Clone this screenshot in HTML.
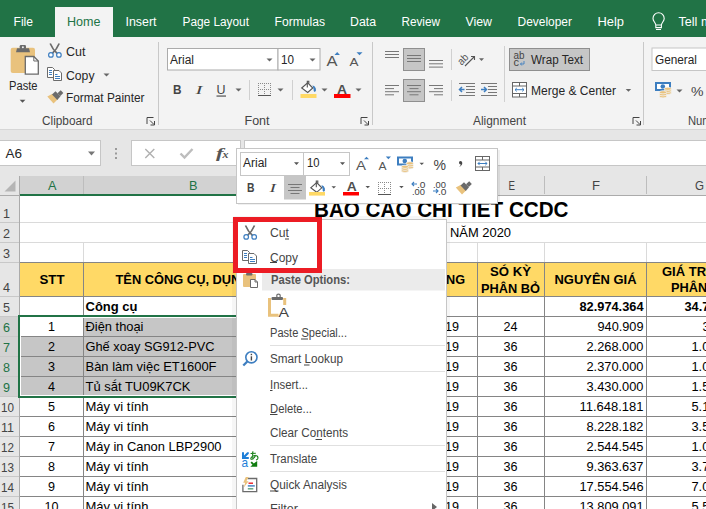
<!DOCTYPE html>
<html><head><meta charset="utf-8"><style>
html,body{margin:0;padding:0;width:706px;height:509px;overflow:hidden;background:#fff}
svg{display:block;font-family:"Liberation Sans",sans-serif}
</style></head><body>
<svg width="706" height="509" viewBox="0 0 706 509">
<rect x="0" y="0" width="706" height="37" fill="#217346" />
<rect x="55" y="7" width="58" height="30" fill="#f3f3f3" />
<text x="13.5" y="26" font-size="12.5" fill="#ffffff" textLength="19.5" lengthAdjust="spacingAndGlyphs" >File</text>
<text x="125.5" y="26" font-size="12.5" fill="#ffffff" textLength="31" lengthAdjust="spacingAndGlyphs" >Insert</text>
<text x="182.5" y="26" font-size="12.5" fill="#ffffff" textLength="66.5" lengthAdjust="spacingAndGlyphs" >Page Layout</text>
<text x="274.5" y="26" font-size="12.5" fill="#ffffff" textLength="50.5" lengthAdjust="spacingAndGlyphs" >Formulas</text>
<text x="350.0" y="26" font-size="12.5" fill="#ffffff" textLength="26.0" lengthAdjust="spacingAndGlyphs" >Data</text>
<text x="401.5" y="26" font-size="12.5" fill="#ffffff" textLength="38.5" lengthAdjust="spacingAndGlyphs" >Review</text>
<text x="465.5" y="26" font-size="12.5" fill="#ffffff" textLength="26.5" lengthAdjust="spacingAndGlyphs" >View</text>
<text x="517.5" y="26" font-size="12.5" fill="#ffffff" textLength="54.5" lengthAdjust="spacingAndGlyphs" >Developer</text>
<text x="597.5" y="26" font-size="12.5" fill="#ffffff" textLength="26.5" lengthAdjust="spacingAndGlyphs" >Help</text>
<text x="67" y="26" font-size="12.5" fill="#217346" textLength="33.5" lengthAdjust="spacingAndGlyphs" >Home</text>
<path d="M655.8,25 c0,-2.2 -2.8,-3.6 -2.8,-6.6 a5.6,5.6 0 0 1 11.2,0 c0,3 -2.8,4.4 -2.8,6.6 z M655.8,25 v2.6 h5.6 v-2.6 M656,29.5 h5" fill="none" stroke="#ffffff" stroke-width="1.1" />
<text x="678.5" y="26" font-size="12.5" fill="#ffffff" textLength="70" lengthAdjust="spacingAndGlyphs" >Tell me what</text>
<rect x="0" y="37" width="706" height="92" fill="#f3f3f3" />
<rect x="0" y="129" width="706" height="1" fill="#d6d6d6" />
<rect x="0" y="130" width="706" height="46" fill="#e6e6e6" />
<rect x="158" y="42" width="1" height="83" fill="#c8c8c8" />
<rect x="372" y="42" width="1" height="83" fill="#c8c8c8" />
<rect x="643" y="42" width="1" height="83" fill="#c8c8c8" />
<text x="42" y="125" font-size="12" fill="#444444" textLength="50.5" lengthAdjust="spacingAndGlyphs" >Clipboard</text>
<text x="244.5" y="125" font-size="12" fill="#444444" textLength="25" lengthAdjust="spacingAndGlyphs" >Font</text>
<text x="473" y="125" font-size="12" fill="#444444" textLength="53" lengthAdjust="spacingAndGlyphs" >Alignment</text>
<text x="688" y="125" font-size="12" fill="#444444" textLength="40" lengthAdjust="spacingAndGlyphs" >Number</text>
<path d="M147.0,124 v-6.5 h6.5" fill="none" stroke="#444" stroke-width="1" />
<path d="M150.0,120.5 l4,4 M154.5,121 v4 h-4" fill="none" stroke="#444" stroke-width="1" />
<path d="M361.0,124 v-6.5 h6.5" fill="none" stroke="#444" stroke-width="1" />
<path d="M364.0,120.5 l4,4 M368.5,121 v4 h-4" fill="none" stroke="#444" stroke-width="1" />
<path d="M633.0,124 v-6.5 h6.5" fill="none" stroke="#444" stroke-width="1" />
<path d="M636.0,120.5 l4,4 M640.5,121 v4 h-4" fill="none" stroke="#444" stroke-width="1" />
<rect x="10.7" y="47.7" width="24.3" height="25.3" fill="#e9c27d"  rx="2"/>
<path d="M16,52.2 l1,-3.9 h12 l1,3.9 z" fill="#6b6b6b" />
<rect x="19.7" y="45" width="6.3" height="4" fill="#6b6b6b"  rx="1.2"/>
<circle cx="22.9" cy="47.3" r="1" fill="#f3f3f3"/>
<path d="M25.3,56.5 h8.5 l4.5,4.5 v13.2 h-13 z" fill="#ffffff" stroke="#6b6b6b" stroke-width="1.3" />
<path d="M33.8,56.5 v4.5 h4.5" fill="none" stroke="#6b6b6b" stroke-width="1" />
<text x="9" y="90" font-size="12.5" fill="#262626" textLength="28.5" lengthAdjust="spacingAndGlyphs" >Paste</text>
<path d="M19.7,99.8 h5.7 l-2.85,3 z" fill="#555" />
<path d="M50.2,43.5 Q52.7,49.5 57.2,53.5 M59.2,43.5 Q56.7,49.5 52.2,53.5" fill="none" stroke="#6b6b6b" stroke-width="1.7" />
<circle cx="50.900000000000006" cy="54.9" r="2.3" fill="#fff" stroke="#3d7ec0" stroke-width="1.2"/>
<circle cx="58.900000000000006" cy="54.9" r="2.3" fill="#fff" stroke="#3d7ec0" stroke-width="1.2"/>
<text x="66" y="56" font-size="12.5" fill="#262626" textLength="19.5" lengthAdjust="spacingAndGlyphs" >Cut</text>
<path d="M47.5,67.5 h5 l2,2 v8 h-7 z" fill="#fff" stroke="#6b6b6b" stroke-width="1" />
<path d="M53.5,70.5 h5.5 l2.5,2.5 v7.5 h-8 z" fill="#fff" stroke="#6b6b6b" stroke-width="1" />
<path d="M49,70.5h3M49,72.5h3M49,74.5h3M55,74.5h2.5M55,76.5h5M55,78.5h5" fill="none" stroke="#3d7ec0" stroke-width="1" />
<text x="66" y="79.5" font-size="12.5" fill="#262626" textLength="28.5" lengthAdjust="spacingAndGlyphs" >Copy</text>
<path d="M103.5,73.5 h6 l-3,3 z" fill="#666" />
<path d="M47.3,96.5 L52.5,93.8 L57.8,99.2 L53.5,103.5 z" fill="#e9c27d" />
<path d="M52,94.5 l3.5,-3.2 l5,5 l-3.2,3.7 z" fill="#6b6b6b" />
<path d="M57.5,93.3 l3.2,-3 l2.6,2.6 l-3,3.2 z" fill="#6b6b6b" />
<text x="66" y="102" font-size="12.5" fill="#262626" textLength="78.5" lengthAdjust="spacingAndGlyphs" >Format Painter</text>
<rect x="167.5" y="48.5" width="110.5" height="21.5" fill="#ffffff"  stroke="#ababab" stroke-width="1"/>
<rect x="278" y="48.5" width="42" height="21.5" fill="#ffffff"  stroke="#ababab" stroke-width="1"/>
<text x="170" y="64" font-size="12.5" fill="#262626" textLength="24" lengthAdjust="spacingAndGlyphs" >Arial</text>
<text x="281" y="64" font-size="12.5" fill="#262626" textLength="13" lengthAdjust="spacingAndGlyphs" >10</text>
<path d="M266.5,58.5 h6 l-3,3 z" fill="#666" />
<path d="M309.5,58.5 h6 l-3,3 z" fill="#666" />
<text x="326.5" y="65.5" font-size="15" fill="#555" textLength="11" lengthAdjust="spacingAndGlyphs" >A</text>
<path d="M334.5,55 l2.7,-3 l2.7,3 z" fill="#3d7ec0" />
<text x="349.5" y="65.5" font-size="11.5" fill="#555" textLength="9" lengthAdjust="spacingAndGlyphs" >A</text>
<path d="M356.5,52.3 h6 l-3,3 z" fill="#3d7ec0" />
<text x="173" y="94" font-size="12.5" fill="#444" textLength="8.5" lengthAdjust="spacingAndGlyphs" font-weight="bold" >B</text>
<text x="195.5" y="94" font-size="13" fill="#444" textLength="7" lengthAdjust="spacingAndGlyphs" font-style="italic" font-family="Liberation Serif">I</text>
<text x="216.5" y="94" font-size="12.5" fill="#444" textLength="9" lengthAdjust="spacingAndGlyphs" >U</text>
<rect x="216.5" y="95.5" width="9.5" height="1.1" fill="#444" />
<path d="M235.5,88.5 h6 l-3,3 z" fill="#666" />
<rect x="249" y="80" width="1" height="20" fill="#d0d0d0" />
<path d="M258,83h1v1h-1zM258,89h1v1h-1zM260,83h1v1h-1zM260,89h1v1h-1zM262,83h1v1h-1zM262,89h1v1h-1zM264,83h1v1h-1zM264,89h1v1h-1zM266,83h1v1h-1zM266,89h1v1h-1zM268,83h1v1h-1zM268,89h1v1h-1zM270,83h1v1h-1zM270,89h1v1h-1zM258,83h1v1h-1zM264,83h1v1h-1zM270,83h1v1h-1zM258,85h1v1h-1zM264,85h1v1h-1zM270,85h1v1h-1zM258,87h1v1h-1zM264,87h1v1h-1zM270,87h1v1h-1zM258,89h1v1h-1zM264,89h1v1h-1zM270,89h1v1h-1zM258,91h1v1h-1zM264,91h1v1h-1zM270,91h1v1h-1zM258,93h1v1h-1zM264,93h1v1h-1zM270,93h1v1h-1z" fill="#8a8a8a" />
<rect x="258" y="95" width="13" height="1" fill="#555" />
<path d="M277.5,88.5 h6 l-3,3 z" fill="#666" />
<rect x="292" y="80" width="1" height="20" fill="#d0d0d0" />
<path d="M301.7,88.0 L307.7,82.8 L312.8,88.0 L307.7,92.5 z" fill="#fff" stroke="#555" stroke-width="1.1" />
<path d="M307.3,87.5 V81.2 h1.5 v2.2" fill="none" stroke="#555" stroke-width="1.1" />
<path d="M312.5,85.3 q2.8,0.6 3.4,3.4 q0.6,2.8 -1.3,3.2 q-1.3,-0.6 -1,-3 z" fill="#3d7ec0" />
<rect x="300.5" y="94" width="16" height="4" fill="#ffd966" />
<path d="M321.5,88.5 h6 l-3,3 z" fill="#666" />
<text x="337" y="93.8" font-size="13.5" fill="#505050" textLength="10" lengthAdjust="spacingAndGlyphs" font-weight="bold" >A</text>
<rect x="334" y="94" width="16.5" height="4" fill="#ff0000" />
<path d="M355.5,88.5 h6 l-3,3 z" fill="#666" />
<rect x="403.5" y="48.5" width="21" height="22" fill="#c6c6c6"  stroke="#8f8f8f" stroke-width="1"/>
<rect x="403.5" y="79.5" width="21" height="22" fill="#c6c6c6"  stroke="#8f8f8f" stroke-width="1"/>
<rect x="385" y="51" width="14" height="1" fill="#777" />
<rect x="385" y="54" width="14" height="1" fill="#777" />
<rect x="385" y="57" width="14" height="1" fill="#777" />
<rect x="407" y="55" width="14" height="1" fill="#777" />
<rect x="407" y="58" width="14" height="1" fill="#777" />
<rect x="407" y="61" width="14" height="1" fill="#777" />
<rect x="429" y="60.0" width="14" height="1" fill="#777" />
<rect x="429" y="63.3" width="14" height="1" fill="#777" />
<rect x="429" y="66.6" width="14" height="1" fill="#777" />
<rect x="385" y="85.0" width="14" height="1" fill="#777" />
<rect x="385" y="88.1" width="9" height="1" fill="#777" />
<rect x="385" y="91.2" width="14" height="1" fill="#777" />
<rect x="385" y="94.3" width="9" height="1" fill="#777" />
<rect x="407" y="85.0" width="14" height="1" fill="#777" />
<rect x="409.5" y="88.1" width="9" height="1" fill="#777" />
<rect x="407" y="91.2" width="14" height="1" fill="#777" />
<rect x="409.5" y="94.3" width="9" height="1" fill="#777" />
<rect x="429" y="85.0" width="14" height="1" fill="#777" />
<rect x="434" y="88.1" width="9" height="1" fill="#777" />
<rect x="429" y="91.2" width="14" height="1" fill="#777" />
<rect x="434" y="94.3" width="9" height="1" fill="#777" />
<rect x="451" y="80" width="1" height="21" fill="#d0d0d0" />
<rect x="451" y="49" width="1" height="21" fill="#d0d0d0" />
<text x="457" y="63" font-size="10.5" fill="#555" textLength="11" lengthAdjust="spacingAndGlyphs" transform="rotate(-45 462.5 59)">ab</text>
<path d="M465,66 l9.5,-9.5 M471,56.5 h3.5 v3.5" fill="none" stroke="#555" stroke-width="1.1" />
<path d="M479,58.2 h5 l-2.5,2.8 z" fill="#666" />
<rect x="459" y="83" width="16" height="1" fill="#777" />
<rect x="466" y="86" width="9" height="1" fill="#777" />
<rect x="466" y="89" width="9" height="1" fill="#777" />
<rect x="466" y="92" width="9" height="1" fill="#777" />
<rect x="459" y="95" width="16" height="1" fill="#777" />
<path d="M464.5,89.5 h-5 M462,87 l-2.5,2.5 l2.5,2.5" fill="none" stroke="#3d7ec0" stroke-width="1.5" />
<rect x="481" y="83" width="16" height="1" fill="#777" />
<rect x="488" y="86" width="9" height="1" fill="#777" />
<rect x="488" y="89" width="9" height="1" fill="#777" />
<rect x="488" y="92" width="9" height="1" fill="#777" />
<rect x="481" y="95" width="16" height="1" fill="#777" />
<path d="M481,89.5 h5.5 M484,87 l2.5,2.5 l-2.5,2.5" fill="none" stroke="#3d7ec0" stroke-width="1.5" />
<rect x="504" y="46" width="1" height="56" fill="#d0d0d0" />
<rect x="509.5" y="48.5" width="80" height="22" fill="#c6c6c6"  stroke="#8f8f8f" stroke-width="1"/>
<text x="513.5" y="59" font-size="10" fill="#444" textLength="11" lengthAdjust="spacingAndGlyphs" >ab</text>
<text x="513.5" y="65.5" font-size="10" fill="#444" textLength="5.5" lengthAdjust="spacingAndGlyphs" >c</text>
<path d="M524,61 v3 h-3.5 M521.8,62.5 l-1.3,1.5 l1.3,1.5" fill="none" stroke="#3d7ec0" stroke-width="0.9" />
<text x="531" y="64" font-size="12.5" fill="#262626" textLength="52" lengthAdjust="spacingAndGlyphs" >Wrap Text</text>
<rect x="512.5" y="82.5" width="14" height="14.5" fill="#fff"  stroke="#666" stroke-width="1"/>
<path d="M512.5,86 h14 M512.5,93.5 h14 M519.5,82.5 v3.5 M519.5,93.5 v3.5" fill="none" stroke="#666" stroke-width="1" />
<path d="M515,89.7 h9 M516.8,88 l-1.8,1.7 l1.8,1.7 M522.2,88 l1.8,1.7 l-1.8,1.7" fill="none" stroke="#3d7ec0" stroke-width="1" />
<text x="531" y="95" font-size="12.5" fill="#262626" textLength="85" lengthAdjust="spacingAndGlyphs" >Merge &amp; Center</text>
<path d="M625.7,89 h5.5 l-2.75,2.8 z" fill="#666" />
<rect x="652" y="48" width="60" height="22.5" fill="#ffffff"  stroke="#c6c6c6" stroke-width="1"/>
<text x="655" y="64" font-size="12.5" fill="#262626" textLength="42" lengthAdjust="spacingAndGlyphs" >General</text>
<rect x="655" y="82" width="16" height="9" fill="#3d7ec0" />
<rect x="657" y="84" width="12" height="5" fill="#fff" />
<circle cx="662.8" cy="86.5" r="2.3" fill="#3d7ec0"/>
<ellipse cx="667.8" cy="92.8" rx="3.6" ry="1.6" fill="#e9c27d" stroke="#f3f3f3" stroke-width="0.8"/>
<ellipse cx="667.8" cy="90.8" rx="3.6" ry="1.6" fill="#e9c27d" stroke="#f3f3f3" stroke-width="0.8"/>
<ellipse cx="667.8" cy="88.8" rx="3.6" ry="1.6" fill="#e9c27d" stroke="#f3f3f3" stroke-width="0.8"/>
<ellipse cx="663" cy="96.3" rx="3.6" ry="1.6" fill="#e9c27d" stroke="#f3f3f3" stroke-width="0.8"/>
<ellipse cx="663" cy="94.3" rx="3.6" ry="1.6" fill="#e9c27d" stroke="#f3f3f3" stroke-width="0.8"/>
<ellipse cx="663" cy="92.3" rx="3.6" ry="1.6" fill="#e9c27d" stroke="#f3f3f3" stroke-width="0.8"/>
<path d="M676.5,89.5 h6 l-3,3 z" fill="#666" />
<text x="691" y="96" font-size="13" fill="#444" textLength="12.5" lengthAdjust="spacingAndGlyphs" >%</text>
<rect x="-1.5" y="140.5" width="102" height="25" fill="#ffffff"  stroke="#c6c6c6" stroke-width="1"/>
<text x="5.5" y="158" font-size="12.5" fill="#262626" textLength="16.5" lengthAdjust="spacingAndGlyphs" >A6</text>
<path d="M88,151.5 h7 l-3.5,4 z" fill="#777" />
<rect x="115" y="148" width="2" height="2" fill="#9a9a9a" />
<rect x="115" y="152.5" width="2" height="2" fill="#9a9a9a" />
<rect x="115" y="157" width="2" height="2" fill="#9a9a9a" />
<rect x="131.5" y="140.5" width="109" height="25" fill="#ffffff"  stroke="#c6c6c6" stroke-width="1"/>
<path d="M145.3,149 l9,9 M154.3,149 l-9,9" fill="none" stroke="#b0b0b0" stroke-width="1.4" />
<path d="M180.5,153.5 l4,4 l8,-8.5" fill="none" stroke="#bdbdbd" stroke-width="2.4" />
<text x="216" y="157.5" font-size="14" fill="#555" textLength="7.5" lengthAdjust="spacingAndGlyphs" font-weight="bold" font-style="italic" font-family="Liberation Serif">f</text>
<text x="222.5" y="157.5" font-size="10" fill="#555" textLength="6" lengthAdjust="spacingAndGlyphs" font-weight="bold" font-style="italic" font-family="Liberation Serif">x</text>
<rect x="244.5" y="140.5" width="470" height="25" fill="#ffffff"  stroke="#c6c6c6" stroke-width="1"/>
<rect x="0" y="176" width="706" height="20" fill="#e6e6e6" />
<rect x="20" y="176" width="420" height="19" fill="#d2d2d2" />
<rect x="0" y="195" width="706" height="1" fill="#ababab" />
<rect x="20" y="194" width="420" height="2" fill="#217346" />
<rect x="83" y="176" width="1" height="18" fill="#bdbdbd" />
<rect x="476" y="176" width="1" height="18" fill="#bdbdbd" />
<rect x="544" y="176" width="1" height="18" fill="#bdbdbd" />
<rect x="646" y="176" width="1" height="18" fill="#bdbdbd" />
<text x="48" y="190" font-size="12.5" fill="#217346" textLength="8.5" lengthAdjust="spacingAndGlyphs" >A</text>
<text x="189" y="190" font-size="12.5" fill="#217346" textLength="8.5" lengthAdjust="spacingAndGlyphs" >B</text>
<text x="508.5" y="190" font-size="12.5" fill="#444" textLength="6.5" lengthAdjust="spacingAndGlyphs" >E</text>
<text x="592" y="190" font-size="12.5" fill="#444" textLength="8" lengthAdjust="spacingAndGlyphs" >F</text>
<text x="695" y="190" font-size="12.5" fill="#444" textLength="9" lengthAdjust="spacingAndGlyphs" >G</text>
<path d="M15.5,180.5 v11 h-11 z" fill="#b5b5b5" />
<rect x="0" y="196" width="19" height="313" fill="#e6e6e6" />
<rect x="19" y="176" width="1" height="333" fill="#ababab" />
<rect x="0" y="316" width="19" height="80" fill="#d2d2d2" />
<rect x="20" y="196" width="686" height="313" fill="#ffffff" />
<rect x="20" y="262" width="686" height="34" fill="#ffd966" />
<rect x="21" y="336" width="419" height="59" fill="#c6c6c6" />
<rect x="84" y="318" width="356" height="18" fill="#c6c6c6" />
<rect x="20" y="222" width="686" height="1" fill="#dadada" />
<rect x="20" y="242" width="686" height="1" fill="#dadada" />
<rect x="20" y="262" width="686" height="1" fill="#dadada" />
<rect x="83" y="242" width="1" height="20" fill="#dadada" />
<rect x="477" y="242" width="1" height="20" fill="#dadada" />
<rect x="544" y="242" width="1" height="20" fill="#dadada" />
<rect x="646" y="242" width="1" height="20" fill="#dadada" />
<rect x="20" y="262" width="686" height="1" fill="#858585" />
<rect x="20" y="296" width="686" height="1" fill="#858585" />
<rect x="20" y="316" width="686" height="1" fill="#858585" />
<rect x="20" y="336" width="686" height="1" fill="#858585" />
<rect x="20" y="356" width="686" height="1" fill="#858585" />
<rect x="20" y="376" width="686" height="1" fill="#858585" />
<rect x="20" y="396" width="686" height="1" fill="#858585" />
<rect x="20" y="416" width="686" height="1" fill="#858585" />
<rect x="20" y="436" width="686" height="1" fill="#858585" />
<rect x="20" y="456" width="686" height="1" fill="#858585" />
<rect x="20" y="476" width="686" height="1" fill="#858585" />
<rect x="20" y="496" width="686" height="1" fill="#858585" />
<rect x="83" y="262" width="1" height="247" fill="#858585" />
<rect x="477" y="262" width="1" height="247" fill="#858585" />
<rect x="544" y="262" width="1" height="247" fill="#858585" />
<rect x="646" y="262" width="1" height="247" fill="#858585" />
<text x="3" y="218" font-size="12.5" fill="#444" textLength="7" lengthAdjust="spacingAndGlyphs" >1</text>
<text x="3" y="238" font-size="12.5" fill="#444" textLength="7" lengthAdjust="spacingAndGlyphs" >2</text>
<text x="3" y="258" font-size="12.5" fill="#444" textLength="7" lengthAdjust="spacingAndGlyphs" >3</text>
<text x="3" y="292" font-size="12.5" fill="#444" textLength="7" lengthAdjust="spacingAndGlyphs" >4</text>
<text x="3" y="312" font-size="12.5" fill="#444" textLength="7" lengthAdjust="spacingAndGlyphs" >5</text>
<text x="3" y="332" font-size="12.5" fill="#217346" textLength="7" lengthAdjust="spacingAndGlyphs" >6</text>
<text x="3" y="352" font-size="12.5" fill="#217346" textLength="7" lengthAdjust="spacingAndGlyphs" >7</text>
<text x="3" y="372" font-size="12.5" fill="#217346" textLength="7" lengthAdjust="spacingAndGlyphs" >8</text>
<text x="3" y="392" font-size="12.5" fill="#217346" textLength="7" lengthAdjust="spacingAndGlyphs" >9</text>
<text x="1" y="412" font-size="12.5" fill="#444" textLength="13" lengthAdjust="spacingAndGlyphs" >10</text>
<text x="1" y="432" font-size="12.5" fill="#444" textLength="13" lengthAdjust="spacingAndGlyphs" >11</text>
<text x="1" y="452" font-size="12.5" fill="#444" textLength="13" lengthAdjust="spacingAndGlyphs" >12</text>
<text x="1" y="472" font-size="12.5" fill="#444" textLength="13" lengthAdjust="spacingAndGlyphs" >13</text>
<text x="1" y="492" font-size="12.5" fill="#444" textLength="13" lengthAdjust="spacingAndGlyphs" >14</text>
<text x="1" y="512" font-size="12.5" fill="#444" textLength="13" lengthAdjust="spacingAndGlyphs" >15</text>
<rect x="0" y="222" width="19" height="1" fill="#c8c8c8" />
<rect x="0" y="242" width="19" height="1" fill="#c8c8c8" />
<rect x="0" y="262" width="19" height="1" fill="#c8c8c8" />
<rect x="0" y="296" width="19" height="1" fill="#c8c8c8" />
<rect x="0" y="316" width="19" height="1" fill="#c8c8c8" />
<rect x="0" y="336" width="19" height="1" fill="#c8c8c8" />
<rect x="0" y="356" width="19" height="1" fill="#c8c8c8" />
<rect x="0" y="376" width="19" height="1" fill="#c8c8c8" />
<rect x="0" y="396" width="19" height="1" fill="#c8c8c8" />
<rect x="0" y="416" width="19" height="1" fill="#c8c8c8" />
<rect x="0" y="436" width="19" height="1" fill="#c8c8c8" />
<rect x="0" y="456" width="19" height="1" fill="#c8c8c8" />
<rect x="0" y="476" width="19" height="1" fill="#c8c8c8" />
<rect x="0" y="496" width="19" height="1" fill="#c8c8c8" />
<rect x="0" y="516" width="19" height="1" fill="#c8c8c8" />
<rect x="20" y="317" width="420" height="1" fill="#ffffff" />
<rect x="20" y="395" width="420" height="1" fill="#ffffff" />
<rect x="20" y="317" width="1" height="79" fill="#ffffff" />
<rect x="18" y="315" width="422" height="2" fill="#217346" />
<rect x="18" y="396" width="422" height="2" fill="#217346" />
<rect x="18" y="315" width="2" height="83" fill="#217346" />
<text x="314" y="216.6" font-size="21.3" fill="#000" textLength="254.5" lengthAdjust="spacingAndGlyphs" font-weight="bold" >BAO CAO CHI TIET CCDC</text>
<text x="450" y="237" font-size="13.4" fill="#000" textLength="61" lengthAdjust="spacingAndGlyphs" >NĂM 2020</text>
<text x="52" y="284" font-size="13.4" fill="#000" textLength="25" lengthAdjust="spacingAndGlyphs" font-weight="bold" text-anchor="middle" >STT</text>
<text x="115.5" y="284" font-size="13.4" fill="#000" textLength="157" lengthAdjust="spacingAndGlyphs" font-weight="bold" >TÊN CÔNG CỤ, DỤNG CỤ</text>
<text x="465" y="284" font-size="13.4" fill="#000" textLength="19" lengthAdjust="spacingAndGlyphs" font-weight="bold" text-anchor="end" >NG</text>
<text x="510.5" y="276" font-size="13.4" fill="#000" textLength="41" lengthAdjust="spacingAndGlyphs" font-weight="bold" text-anchor="middle" >SÓ KỲ</text>
<text x="510.5" y="292.5" font-size="13.4" fill="#000" textLength="59" lengthAdjust="spacingAndGlyphs" font-weight="bold" text-anchor="middle" >PHÂN BỎ</text>
<text x="595.5" y="284" font-size="13.4" fill="#000" textLength="82" lengthAdjust="spacingAndGlyphs" font-weight="bold" text-anchor="middle" >NGUYÊN GIÁ</text>
<text x="662" y="275.5" font-size="13.4" fill="#000" textLength="70" lengthAdjust="spacingAndGlyphs" font-weight="bold" >GIÁ TRỊ ĐÃ</text>
<text x="700.5" y="292" font-size="13.4" fill="#000" textLength="59" lengthAdjust="spacingAndGlyphs" font-weight="bold" text-anchor="middle" >PHÂN BỔ</text>
<text x="85.5" y="311" font-size="13.4" fill="#000" textLength="52" lengthAdjust="spacingAndGlyphs" font-weight="bold" >Công cụ</text>
<text x="643.5" y="311" font-size="13.4" fill="#000" textLength="64" lengthAdjust="spacingAndGlyphs" font-weight="bold" text-anchor="end" >82.974.364</text>
<text x="748.5" y="311" font-size="13.4" fill="#000" textLength="64" lengthAdjust="spacingAndGlyphs" font-weight="bold" text-anchor="end" >34.712.345</text>
<text x="51.5" y="331" font-size="13.4" fill="#000" textLength="7" lengthAdjust="spacingAndGlyphs" text-anchor="middle" >1</text>
<text x="85.5" y="331" font-size="13.4" fill="#000" textLength="58" lengthAdjust="spacingAndGlyphs" >Điện thoại</text>
<text x="459" y="331" font-size="13.4" fill="#000" textLength="28" lengthAdjust="spacingAndGlyphs" text-anchor="end" >2019</text>
<text x="510.5" y="331" font-size="13.4" fill="#000" textLength="14" lengthAdjust="spacingAndGlyphs" text-anchor="middle" >24</text>
<text x="643.5" y="331" font-size="13.4" fill="#000" textLength="46" lengthAdjust="spacingAndGlyphs" text-anchor="end" >940.909</text>
<text x="748.5" y="331" font-size="13.4" fill="#000" textLength="46" lengthAdjust="spacingAndGlyphs" text-anchor="end" >313.636</text>
<text x="51.5" y="351" font-size="13.4" fill="#000" textLength="7" lengthAdjust="spacingAndGlyphs" text-anchor="middle" >2</text>
<text x="85.5" y="351" font-size="13.4" fill="#000" textLength="129" lengthAdjust="spacingAndGlyphs" >Ghế xoay SG912-PVC</text>
<text x="459" y="351" font-size="13.4" fill="#000" textLength="28" lengthAdjust="spacingAndGlyphs" text-anchor="end" >2019</text>
<text x="510.5" y="351" font-size="13.4" fill="#000" textLength="14" lengthAdjust="spacingAndGlyphs" text-anchor="middle" >36</text>
<text x="643.5" y="351" font-size="13.4" fill="#000" textLength="57" lengthAdjust="spacingAndGlyphs" text-anchor="end" >2.268.000</text>
<text x="748.5" y="351" font-size="13.4" fill="#000" textLength="57" lengthAdjust="spacingAndGlyphs" text-anchor="end" >1.008.000</text>
<text x="51.5" y="371" font-size="13.4" fill="#000" textLength="7" lengthAdjust="spacingAndGlyphs" text-anchor="middle" >3</text>
<text x="85.5" y="371" font-size="13.4" fill="#000" textLength="131" lengthAdjust="spacingAndGlyphs" >Bàn làm việc ET1600F</text>
<text x="459" y="371" font-size="13.4" fill="#000" textLength="28" lengthAdjust="spacingAndGlyphs" text-anchor="end" >2019</text>
<text x="510.5" y="371" font-size="13.4" fill="#000" textLength="14" lengthAdjust="spacingAndGlyphs" text-anchor="middle" >36</text>
<text x="643.5" y="371" font-size="13.4" fill="#000" textLength="57" lengthAdjust="spacingAndGlyphs" text-anchor="end" >2.370.000</text>
<text x="748.5" y="371" font-size="13.4" fill="#000" textLength="57" lengthAdjust="spacingAndGlyphs" text-anchor="end" >1.053.333</text>
<text x="51.5" y="391" font-size="13.4" fill="#000" textLength="7" lengthAdjust="spacingAndGlyphs" text-anchor="middle" >4</text>
<text x="85.5" y="391" font-size="13.4" fill="#000" textLength="105" lengthAdjust="spacingAndGlyphs" >Tủ sắt TU09K7CK</text>
<text x="459" y="391" font-size="13.4" fill="#000" textLength="28" lengthAdjust="spacingAndGlyphs" text-anchor="end" >2019</text>
<text x="510.5" y="391" font-size="13.4" fill="#000" textLength="14" lengthAdjust="spacingAndGlyphs" text-anchor="middle" >36</text>
<text x="643.5" y="391" font-size="13.4" fill="#000" textLength="57" lengthAdjust="spacingAndGlyphs" text-anchor="end" >3.430.000</text>
<text x="748.5" y="391" font-size="13.4" fill="#000" textLength="57" lengthAdjust="spacingAndGlyphs" text-anchor="end" >1.524.444</text>
<text x="51.5" y="411" font-size="13.4" fill="#000" textLength="7" lengthAdjust="spacingAndGlyphs" text-anchor="middle" >5</text>
<text x="85.5" y="411" font-size="13.4" fill="#000" textLength="63" lengthAdjust="spacingAndGlyphs" >Máy vi tính</text>
<text x="459" y="411" font-size="13.4" fill="#000" textLength="28" lengthAdjust="spacingAndGlyphs" text-anchor="end" >2019</text>
<text x="510.5" y="411" font-size="13.4" fill="#000" textLength="14" lengthAdjust="spacingAndGlyphs" text-anchor="middle" >36</text>
<text x="643.5" y="411" font-size="13.4" fill="#000" textLength="64" lengthAdjust="spacingAndGlyphs" text-anchor="end" >11.648.181</text>
<text x="748.5" y="411" font-size="13.4" fill="#000" textLength="57" lengthAdjust="spacingAndGlyphs" text-anchor="end" >5.176.969</text>
<text x="51.5" y="431" font-size="13.4" fill="#000" textLength="7" lengthAdjust="spacingAndGlyphs" text-anchor="middle" >6</text>
<text x="85.5" y="431" font-size="13.4" fill="#000" textLength="63" lengthAdjust="spacingAndGlyphs" >Máy vi tính</text>
<text x="459" y="431" font-size="13.4" fill="#000" textLength="28" lengthAdjust="spacingAndGlyphs" text-anchor="end" >2019</text>
<text x="510.5" y="431" font-size="13.4" fill="#000" textLength="14" lengthAdjust="spacingAndGlyphs" text-anchor="middle" >36</text>
<text x="643.5" y="431" font-size="13.4" fill="#000" textLength="57" lengthAdjust="spacingAndGlyphs" text-anchor="end" >8.228.182</text>
<text x="748.5" y="431" font-size="13.4" fill="#000" textLength="57" lengthAdjust="spacingAndGlyphs" text-anchor="end" >3.556.969</text>
<text x="51.5" y="451" font-size="13.4" fill="#000" textLength="7" lengthAdjust="spacingAndGlyphs" text-anchor="middle" >7</text>
<text x="85.5" y="451" font-size="13.4" fill="#000" textLength="136" lengthAdjust="spacingAndGlyphs" >Máy in Canon LBP2900</text>
<text x="459" y="451" font-size="13.4" fill="#000" textLength="28" lengthAdjust="spacingAndGlyphs" text-anchor="end" >2019</text>
<text x="510.5" y="451" font-size="13.4" fill="#000" textLength="14" lengthAdjust="spacingAndGlyphs" text-anchor="middle" >36</text>
<text x="643.5" y="451" font-size="13.4" fill="#000" textLength="57" lengthAdjust="spacingAndGlyphs" text-anchor="end" >2.544.545</text>
<text x="748.5" y="451" font-size="13.4" fill="#000" textLength="57" lengthAdjust="spacingAndGlyphs" text-anchor="end" >1.030.909</text>
<text x="51.5" y="471" font-size="13.4" fill="#000" textLength="7" lengthAdjust="spacingAndGlyphs" text-anchor="middle" >8</text>
<text x="85.5" y="471" font-size="13.4" fill="#000" textLength="63" lengthAdjust="spacingAndGlyphs" >Máy vi tính</text>
<text x="459" y="471" font-size="13.4" fill="#000" textLength="28" lengthAdjust="spacingAndGlyphs" text-anchor="end" >2019</text>
<text x="510.5" y="471" font-size="13.4" fill="#000" textLength="14" lengthAdjust="spacingAndGlyphs" text-anchor="middle" >36</text>
<text x="643.5" y="471" font-size="13.4" fill="#000" textLength="57" lengthAdjust="spacingAndGlyphs" text-anchor="end" >9.363.637</text>
<text x="748.5" y="471" font-size="13.4" fill="#000" textLength="57" lengthAdjust="spacingAndGlyphs" text-anchor="end" >3.745.454</text>
<text x="51.5" y="491" font-size="13.4" fill="#000" textLength="7" lengthAdjust="spacingAndGlyphs" text-anchor="middle" >9</text>
<text x="85.5" y="491" font-size="13.4" fill="#000" textLength="63" lengthAdjust="spacingAndGlyphs" >Máy vi tính</text>
<text x="459" y="491" font-size="13.4" fill="#000" textLength="28" lengthAdjust="spacingAndGlyphs" text-anchor="end" >2019</text>
<text x="510.5" y="491" font-size="13.4" fill="#000" textLength="14" lengthAdjust="spacingAndGlyphs" text-anchor="middle" >36</text>
<text x="643.5" y="491" font-size="13.4" fill="#000" textLength="64" lengthAdjust="spacingAndGlyphs" text-anchor="end" >17.554.546</text>
<text x="748.5" y="491" font-size="13.4" fill="#000" textLength="57" lengthAdjust="spacingAndGlyphs" text-anchor="end" >7.021.818</text>
<text x="51.5" y="511" font-size="13.4" fill="#000" textLength="14" lengthAdjust="spacingAndGlyphs" text-anchor="middle" >10</text>
<text x="85.5" y="511" font-size="13.4" fill="#000" textLength="63" lengthAdjust="spacingAndGlyphs" >Máy vi tính</text>
<text x="459" y="511" font-size="13.4" fill="#000" textLength="28" lengthAdjust="spacingAndGlyphs" text-anchor="end" >2019</text>
<text x="510.5" y="511" font-size="13.4" fill="#000" textLength="14" lengthAdjust="spacingAndGlyphs" text-anchor="middle" >36</text>
<text x="643.5" y="511" font-size="13.4" fill="#000" textLength="64" lengthAdjust="spacingAndGlyphs" text-anchor="end" >13.809.091</text>
<text x="748.5" y="511" font-size="13.4" fill="#000" textLength="57" lengthAdjust="spacingAndGlyphs" text-anchor="end" >5.523.636</text>
<rect x="238" y="150" width="262" height="55" fill="#000" opacity="0.06"/>
<rect x="236.5" y="148.5" width="261" height="55" fill="#ffffff"  stroke="#c6c6c6" stroke-width="1"/>
<rect x="240.5" y="152.5" width="63" height="23" fill="#fff"  stroke="#c6c6c6" stroke-width="1"/>
<rect x="303.5" y="152.5" width="46" height="23" fill="#fff"  stroke="#c6c6c6" stroke-width="1"/>
<text x="243" y="167" font-size="12.5" fill="#262626" textLength="24" lengthAdjust="spacingAndGlyphs" >Arial</text>
<text x="307" y="167" font-size="12.5" fill="#262626" textLength="12.5" lengthAdjust="spacingAndGlyphs" >10</text>
<path d="M294,162.2 h5 l-2.5,2.7 z" fill="#555" />
<path d="M340,162.2 h5 l-2.5,2.7 z" fill="#555" />
<text x="356" y="169.5" font-size="13" fill="#555" textLength="10" lengthAdjust="spacingAndGlyphs" >A</text>
<path d="M364,159.3 l2.5,-2.6 l2.5,2.6 z" fill="#3d7ec0" />
<text x="378.5" y="169.5" font-size="10" fill="#555" textLength="8" lengthAdjust="spacingAndGlyphs" >A</text>
<path d="M385.8,156.5 h5.2 l-2.6,2.8 z" fill="#3d7ec0" />
<rect x="397" y="156.5" width="16" height="9" fill="#3d7ec0" />
<rect x="399" y="158.5" width="12" height="5" fill="#fff" />
<circle cx="404.8" cy="161.0" r="2.3" fill="#3d7ec0"/>
<ellipse cx="409.8" cy="167.3" rx="3.6" ry="1.6" fill="#e9c27d" stroke="#f3f3f3" stroke-width="0.8"/>
<ellipse cx="409.8" cy="165.3" rx="3.6" ry="1.6" fill="#e9c27d" stroke="#f3f3f3" stroke-width="0.8"/>
<ellipse cx="409.8" cy="163.3" rx="3.6" ry="1.6" fill="#e9c27d" stroke="#f3f3f3" stroke-width="0.8"/>
<ellipse cx="405" cy="170.8" rx="3.6" ry="1.6" fill="#e9c27d" stroke="#f3f3f3" stroke-width="0.8"/>
<ellipse cx="405" cy="168.8" rx="3.6" ry="1.6" fill="#e9c27d" stroke="#f3f3f3" stroke-width="0.8"/>
<ellipse cx="405" cy="166.8" rx="3.6" ry="1.6" fill="#e9c27d" stroke="#f3f3f3" stroke-width="0.8"/>
<path d="M419.5,162.8 h4.5 l-2.25,2.3 z" fill="#555" />
<text x="433.5" y="170" font-size="14" fill="#444" textLength="12.5" lengthAdjust="spacingAndGlyphs" >%</text>
<path d="M460.3,161 q2,0 2,2 q0,2.5 -3.3,4 q1.7,-1.5 1.8,-2.6 q-1.8,0 -1.8,-1.7 q0,-1.7 1.3,-1.7 z" fill="#444" />
<rect x="475.5" y="156.5" width="14" height="14" fill="#fff"  stroke="#666" stroke-width="1"/>
<path d="M475.5,160 h14 M475.5,167 h14 M482.5,156.5 v3.5 M482.5,167 v3.5" fill="none" stroke="#666" stroke-width="1" />
<path d="M478,163.5 h9 M479.7,161.8 l-1.7,1.7 l1.7,1.7 M485.3,161.8 l1.7,1.7 l-1.7,1.7" fill="none" stroke="#3d7ec0" stroke-width="1" />
<text x="247" y="191.5" font-size="12.5" fill="#444" textLength="7.5" lengthAdjust="spacingAndGlyphs" font-weight="bold" >B</text>
<text x="269.5" y="192" font-size="13" fill="#444" textLength="6.5" lengthAdjust="spacingAndGlyphs" font-style="italic" font-family="Liberation Serif">I</text>
<rect x="284" y="176" width="22" height="23.5" fill="#c6c6c6" />
<rect x="288" y="184" width="14" height="1" fill="#777" />
<rect x="290.5" y="187" width="9" height="1" fill="#777" />
<rect x="288" y="190" width="14" height="1" fill="#777" />
<rect x="290.5" y="193" width="9" height="1" fill="#777" />
<path d="M310.7,187.8 L316.7,182.60000000000002 L321.8,187.8 L316.7,192.3 z" fill="#fff" stroke="#555" stroke-width="1.1" />
<path d="M316.3,187.3 V181.0 h1.5 v2.2" fill="none" stroke="#555" stroke-width="1.1" />
<path d="M321.5,185.10000000000002 q2.8,0.6 3.4,3.4 q0.6,2.8 -1.3,3.2 q-1.3,-0.6 -1,-3 z" fill="#3d7ec0" />
<rect x="309" y="192" width="16" height="3.6" fill="#ffd966" />
<path d="M331.5,186.2 h4.5 l-2.25,2.3 z" fill="#555" />
<text x="346.8" y="191.2" font-size="13.5" fill="#505050" textLength="10" lengthAdjust="spacingAndGlyphs" font-weight="bold" >A</text>
<rect x="343" y="192" width="16" height="3.5" fill="#ff0000" />
<path d="M365.5,186 h4.5 l-2.25,2.3 z" fill="#555" />
<path d="M378,182h1v1h-1zM378,188h1v1h-1zM380,182h1v1h-1zM380,188h1v1h-1zM382,182h1v1h-1zM382,188h1v1h-1zM384,182h1v1h-1zM384,188h1v1h-1zM386,182h1v1h-1zM386,188h1v1h-1zM388,182h1v1h-1zM388,188h1v1h-1zM390,182h1v1h-1zM390,188h1v1h-1zM378,182h1v1h-1zM384,182h1v1h-1zM390,182h1v1h-1zM378,184h1v1h-1zM384,184h1v1h-1zM390,184h1v1h-1zM378,186h1v1h-1zM384,186h1v1h-1zM390,186h1v1h-1zM378,188h1v1h-1zM384,188h1v1h-1zM390,188h1v1h-1zM378,190h1v1h-1zM384,190h1v1h-1zM390,190h1v1h-1zM378,192h1v1h-1zM384,192h1v1h-1zM390,192h1v1h-1z" fill="#8a8a8a" />
<rect x="378" y="194" width="13" height="1" fill="#555" />
<path d="M399.2,186 h4.5 l-2.25,2.3 z" fill="#555" />
<text x="417" y="187.5" font-size="9" fill="#444" textLength="8.5" lengthAdjust="spacingAndGlyphs" >.0</text>
<text x="412" y="194.5" font-size="9" fill="#444" textLength="13" lengthAdjust="spacingAndGlyphs" >.00</text>
<path d="M417,184 h-5 M414,182 l-2,2 l2,2" fill="none" stroke="#3d7ec0" stroke-width="1.1" />
<text x="433" y="187.5" font-size="9" fill="#444" textLength="13" lengthAdjust="spacingAndGlyphs" >.00</text>
<text x="438" y="194.5" font-size="9" fill="#444" textLength="8.5" lengthAdjust="spacingAndGlyphs" >.0</text>
<path d="M433,191 h5 M436,189 l2,2 l-2,2" fill="none" stroke="#3d7ec0" stroke-width="1.1" />
<path d="M455.8,187.5 L461.0,184.8 L466.3,190.2 L462.0,194.5 z" fill="#e9c27d" />
<path d="M460.5,185.5 l3.5,-3.2 l5,5 l-3.2,3.7 z" fill="#6b6b6b" />
<path d="M466.0,184.3 l3.2,-3 l2.6,2.6 l-3,3.2 z" fill="#6b6b6b" />
<rect x="232" y="216" width="218" height="300" fill="#000" opacity="0.035" rx="3"/>
<rect x="236.5" y="219.5" width="210" height="292" fill="#ffffff"  stroke="#c6c6c6" stroke-width="1"/>
<rect x="262" y="269" width="183" height="21.5" fill="#ebebeb" />
<text x="270" y="237" font-size="12.5" fill="#444444" textLength="19" lengthAdjust="spacingAndGlyphs" >Cut</text>
<text x="270" y="261.5" font-size="12.5" fill="#444444" textLength="28" lengthAdjust="spacingAndGlyphs" >Copy</text>
<text x="271" y="284" font-size="12.5" fill="#555" textLength="79" lengthAdjust="spacingAndGlyphs" font-weight="bold" >Paste Options:</text>
<text x="270" y="337" font-size="12.5" fill="#444444" textLength="77" lengthAdjust="spacingAndGlyphs" >Paste Special...</text>
<rect x="270" y="345" width="175" height="1" fill="#e0e0e0" />
<text x="270" y="362.5" font-size="12.5" fill="#444444" textLength="73" lengthAdjust="spacingAndGlyphs" >Smart Lookup</text>
<rect x="270" y="371" width="175" height="1" fill="#e0e0e0" />
<text x="270" y="389" font-size="12.5" fill="#444444" textLength="38" lengthAdjust="spacingAndGlyphs" >Insert...</text>
<text x="270" y="413" font-size="12.5" fill="#444444" textLength="42" lengthAdjust="spacingAndGlyphs" >Delete...</text>
<text x="270" y="437" font-size="12.5" fill="#444444" textLength="78" lengthAdjust="spacingAndGlyphs" >Clear Contents</text>
<rect x="270" y="445" width="175" height="1" fill="#e0e0e0" />
<text x="270" y="463" font-size="12.5" fill="#444444" textLength="47" lengthAdjust="spacingAndGlyphs" >Translate</text>
<rect x="270" y="471" width="175" height="1" fill="#e0e0e0" />
<text x="270" y="489" font-size="12.5" fill="#444444" textLength="77" lengthAdjust="spacingAndGlyphs" >Quick Analysis</text>
<text x="270" y="513" font-size="12.5" fill="#444444" textLength="28" lengthAdjust="spacingAndGlyphs" >Filter</text>
<rect x="285" y="238.5" width="4" height="1" fill="#444444" />
<rect x="270" y="262" width="7" height="1" fill="#444444" />
<rect x="301" y="338.5" width="7" height="1" fill="#444444" />
<rect x="304" y="364.5" width="5.5" height="1" fill="#444444" />
<rect x="270" y="390" width="2.5" height="1" fill="#444444" />
<rect x="270" y="414" width="7.5" height="1" fill="#444444" />
<rect x="315.5" y="439" width="6.5" height="1" fill="#444444" />
<rect x="270" y="490.5" width="8.5" height="1" fill="#444444" />
<path d="M432,503 l5,4 l-5,4 z" fill="#666" />
<path d="M245.5,225.5 Q248,231.5 252.5,235.5 M254.5,225.5 Q252,231.5 247.5,235.5" fill="none" stroke="#6b6b6b" stroke-width="1.7" />
<circle cx="246.2" cy="236.9" r="2.3" fill="#fff" stroke="#3d7ec0" stroke-width="1.2"/>
<circle cx="254.2" cy="236.9" r="2.3" fill="#fff" stroke="#3d7ec0" stroke-width="1.2"/>
<path d="M242.5,250.5 h5 l2,2 v8 h-7 z" fill="#fff" stroke="#6b6b6b" stroke-width="1" />
<path d="M248.5,253.5 h5.5 l2.5,2.5 v7.5 h-8 z" fill="#fff" stroke="#6b6b6b" stroke-width="1" />
<path d="M244,253.5h3M244,255.5h3M244,257.5h3M250,257.5h2.5M250,259.5h5M250,261.5h5" fill="none" stroke="#3d7ec0" stroke-width="1" />
<rect x="243" y="274" width="13" height="13" fill="#e9c27d"  rx="1"/>
<rect x="246" y="273" width="6.5" height="2.5" fill="#6b6b6b"  rx="1"/>
<path d="M250.5,279.5 h4.5 l2.5,2.5 v5.5 h-7 z" fill="#fff" stroke="#6b6b6b" stroke-width="1" />
<path d="M255,279.5 v2.5 h2.5" fill="none" stroke="#6b6b6b" stroke-width="1" />
<path d="M269.5,298 v17.3 h9 M284.7,298 v7" fill="none" stroke="#e9c27d" stroke-width="3" />
<rect x="271.5" y="297" width="11.5" height="3" fill="#6b6b6b"  rx="1"/>
<circle cx="278.5" cy="296" r="1.8" fill="none" stroke="#6b6b6b" stroke-width="1.2"/>
<text x="278.5" y="316.5" font-size="13.5" fill="#444" textLength="10.5" lengthAdjust="spacingAndGlyphs" >A</text>
<circle cx="251.4" cy="357.3" r="5.6" fill="#fff" stroke="#3d7ec0" stroke-width="1.6"/>
<path d="M247.3,361.5 l-4,4" fill="none" stroke="#3d7ec0" stroke-width="2.3" />
<rect x="250.7" y="356.3" width="1.4" height="4.2" fill="#444" />
<rect x="250.7" y="353.8" width="1.4" height="1.4" fill="#444" />
<path d="M242,452.2 h2 v3.2 l3.2,-3.2 h1.6 v1.6 l-3.2,3.2 h3.2 v2 h-6.8 z" fill="#1e7fd8" />
<text x="241.5" y="467" font-size="13.5" fill="#1e7fd8" textLength="6.6" lengthAdjust="spacingAndGlyphs" >a</text>
<path d="M250.6,453.6 l5.2,-0.4 M252.9,451.3 q-0.6,4.5 0.3,8 M255.6,455.3 q-4.5,1.2 -4.8,3.2 q0,1.2 1.3,0.7 q2.6,-1.2 3.3,-3.6 q2.6,0.1 2.6,2.4 q0,1.4 -2,2" fill="none" stroke="#107c10" stroke-width="1.05" />
<path d="M257.2,461 v5.7 h-6.9 l2.2,-2 l-2,-2 l1.3,-1.3 l2,2 z" fill="#107c10" />
<path d="M247.8,478.5 h8.9 v13.2 h-13.8 v-7" fill="none" stroke="#6b6b6b" stroke-width="1.3" />
<rect x="248.5" y="482.5" width="4.5" height="1.4" fill="#ec1c24" />
<rect x="247.8" y="485.2" width="7" height="1.4" fill="#3d7ec0" />
<rect x="247.8" y="488.1" width="5.5" height="1.4" fill="#5fa37a" />
<path d="M245.8,477 h3 l-2.5,4.2 h2.3 l-5,6.5 l1.6,-5 h-2 z" fill="#e9c27d" />
<rect x="235.5" y="219.5" width="84" height="51" fill="none"  stroke="#ec1c24" stroke-width="5"/>
</svg></body></html>
